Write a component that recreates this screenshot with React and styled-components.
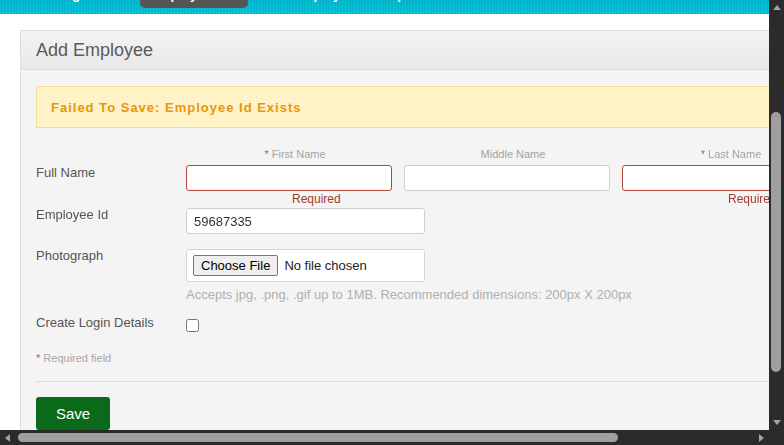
import React, { useLayoutEffect, useRef } from 'react';
import styled, { createGlobalStyle } from 'styled-components';

const App = () => {
  const viewRef = useRef(null);
  const firstRef = useRef(null);

  useLayoutEffect(() => {
    if (firstRef.current) firstRef.current.focus({ preventScroll: true });
    if (viewRef.current) viewRef.current.scrollTop = 160;
  }, []);

  return (
    <Screen>
      <GlobalStyle />
      <Viewport ref={viewRef}>
        <Page>
          <Branding>
            <Logo>Orange<b>HRM</b></Logo>
            <Welcome>Welcome Admin</Welcome>
          </Branding>
          <MenuBar>
            <MenuItem>Configuration</MenuItem>
            <MenuItem active>Employee List</MenuItem>
            <MenuItem>Add Employee</MenuItem>
            <MenuItem>Reports</MenuItem>
          </MenuBar>

          <Panel>
            <PanelHead>
              <Title>Add Employee</Title>
            </PanelHead>
            <PanelBody>
              <Message>Failed To Save: Employee Id Exists</Message>

              <Row first>
                <Label offset={18}>Full Name</Label>
                <NameCol>
                  <SubLabel><Star>*</Star> First Name</SubLabel>
                  <Input ref={firstRef} invalid />
                  <Error>Required</Error>
                </NameCol>
                <NameCol>
                  <SubLabel>Middle Name</SubLabel>
                  <Input />
                  <Error />
                </NameCol>
                <NameCol>
                  <SubLabel><Star>*</Star> Last Name</SubLabel>
                  <Input invalid />
                  <Error>Required</Error>
                </NameCol>
              </Row>

              <Row gap={2}>
                <Label>Employee Id</Label>
                <Input wide defaultValue="59687335" />
              </Row>

              <Row gap={15}>
                <Label>Photograph</Label>
                <div>
                  <FileBox>
                    <FileInput type="file" />
                  </FileBox>
                  <Hint>Accepts jpg, .png, .gif up to 1MB. Recommended dimensions: 200px X 200px</Hint>
                </div>
              </Row>

              <Row gap={14}>
                <Label>Create Login Details</Label>
                <Check type="checkbox" />
              </Row>

              <Note><Star>*</Star> Required field</Note>
              <Divider />
              <SaveButton>Save</SaveButton>
            </PanelBody>
          </Panel>
        </Page>
      </Viewport>

      <VBar>
        <Arrow dir="up" />
        <VTrack>
          <VThumb />
        </VTrack>
        <Arrow dir="down" />
      </VBar>
      <HBar>
        <Arrow dir="left" />
        <HTrack>
          <HThumb />
        </HTrack>
        <Arrow dir="right" />
      </HBar>
      <Corner />
    </Screen>
  );
};

const GlobalStyle = createGlobalStyle`
  html, body {
    margin: 0;
    overflow: hidden;
    background: #fff;
  }
  body {
    font-family: "Liberation Sans", Arial, sans-serif;
    color: #5a5a5a;
  }
`;

const Screen = styled.div`
  width: 784px;
  height: 445px;
  display: grid;
  grid-template-columns: 769px 15px;
  grid-template-rows: 430px 15px;
`;

const Viewport = styled.div`
  overflow: hidden;
  background: #fff;
`;

const barBg = '#2b2b2b';

const VBar = styled.div`
  display: flex;
  flex-direction: column;
  background: ${barBg};
`;

const HBar = styled.div`
  display: flex;
  background: ${barBg};
`;

const Corner = styled.div`
  background: ${barBg};
`;

const VTrack = styled.div`
  flex: 1;
  padding: 97px 3px 0 2px;
`;

const VThumb = styled.div`
  height: 260px;
  border-radius: 5px;
  background: #9f9f9f;
`;

const HTrack = styled.div`
  flex: 1;
  padding: 3px 0 3px 3px;
`;

const HThumb = styled.div`
  width: 600px;
  height: 9px;
  border-radius: 5px;
  background: #9f9f9f;
`;

const arrowShapes = {
  up: 'border-width: 0 4.5px 5px; border-color: transparent transparent #a3a3a3;',
  down: 'border-width: 5px 4.5px 0; border-color: #a3a3a3 transparent transparent;',
  left: 'border-width: 4.5px 5px 4.5px 0; border-color: transparent #a3a3a3 transparent transparent;',
  right: 'border-width: 4.5px 0 4.5px 5px; border-color: transparent transparent transparent #a3a3a3;',
};

const Arrow = styled.div`
  flex: 0 0 15px;
  width: 15px;
  height: 15px;
  display: flex;
  align-items: center;
  justify-content: center;
  &::before {
    content: '';
    border-style: solid;
    ${p => arrowShapes[p.dir]}
  }
`;

const Page = styled.div`
  width: 945px;
  padding-bottom: 55px;
`;

const Branding = styled.div`
  height: 129px;
  padding: 0 29px;
  display: flex;
  align-items: center;
  justify-content: space-between;
`;

const Logo = styled.div`
  font-size: 30px;
  color: #f28c28;
  b { color: #5a5a5a; }
`;

const Welcome = styled.a`
  font-size: 13px;
  color: #5a5a5a;
`;

const MenuBar = styled.nav`
  height: 45px;
  display: flex;
  gap: 6px;
  padding-left: 29px;
  background:
    repeating-linear-gradient(90deg, rgba(255, 255, 255, 0.05) 0 1px, rgba(0, 0, 0, 0.03) 1px 3px),
    linear-gradient(#009fba, #00c4da);
`;

const MenuItem = styled.div`
  height: 39px;
  box-sizing: border-box;
  padding: 18px 10px 0;
  font-size: 13px;
  font-weight: bold;
  line-height: 16px;
  color: #fff;
  border-radius: 0 0 5px 5px;
  background: ${p => (p.active ? '#555555' : 'transparent')};
`;

const Panel = styled.section`
  margin: 16px 20px 0;
  border: 1px solid #dedede;
  background: #f4f4f4;
`;

const PanelHead = styled.div`
  height: 38px;
  padding: 0 15px;
  display: flex;
  align-items: center;
  border-bottom: 1px solid #dedede;
  background: linear-gradient(#f4f4f4, #e8e8e8);
`;

const Title = styled.h1`
  margin: 0;
  font-size: 18px;
  line-height: 22px;
  font-weight: normal;
  color: #5a5a5a;
`;

const PanelBody = styled.div`
  padding: 16px 15px 15px;
`;

const Message = styled.div`
  height: 40px;
  padding: 0 14px;
  display: flex;
  align-items: center;
  border: 1px solid #f6dc96;
  background: #fff2c6;
  color: #e8960f;
  font-size: 13px;
  font-weight: bold;
  letter-spacing: 1px;
`;

const Row = styled.div`
  display: flex;
  align-items: flex-start;
  margin-top: ${p => (p.first ? 20 : p.gap || 0)}px;
`;

const Label = styled.label`
  flex: 0 0 150px;
  margin-top: ${p => (p.offset || 0) - 1}px;
  font-size: 13px;
  line-height: 16px;
  color: #555;
`;

const NameCol = styled.div`
  flex: 0 0 218px;
  text-align: center;
`;

const SubLabel = styled.div`
  height: 13px;
  margin-bottom: 4px;
  font-size: 11px;
  line-height: 13px;
  color: #a3a3a3;
`;

const Star = styled.span`
  color: #b8623e;
`;

const Input = styled.input`
  display: block;
  box-sizing: border-box;
  width: ${p => (p.wide ? 239 : 206)}px;
  height: 26px;
  margin: 0;
  padding: 0 7px;
  border: 1px solid ${p => (p.invalid ? '#b2463a' : '#cfcfcf')};
  border-radius: 3px;
  background: #fff;
  font-family: "Liberation Sans", Arial, sans-serif;
  font-size: 13px;
  color: #333;
  caret-color: #333;
  &:focus { outline: none; }
`;

const Error = styled.div`
  height: 14px;
  margin-top: 1px;
  padding-left: 106px;
  text-align: left;
  font-size: 12px;
  line-height: 14px;
  color: #a33b2c;
`;

const FileBox = styled.div`
  box-sizing: border-box;
  width: 239px;
  height: 33px;
  padding: 0 6px;
  display: flex;
  align-items: center;
  border: 1px solid #d6d6d6;
  border-radius: 3px;
  background: #fff;
`;

const FileInput = styled.input`
  font-family: "Liberation Sans", Arial, sans-serif;
  font-size: 13px;
  color: #222;
  &::file-selector-button {
    height: 21px;
    margin-right: 6px;
    padding: 0 7px;
    border: 1px solid #767676;
    border-radius: 2px;
    background: #efefef;
    font-family: "Liberation Sans", Arial, sans-serif;
    font-size: 13px;
    color: #000;
  }
`;

const Hint = styled.div`
  margin-top: 6px;
  font-size: 13px;
  line-height: 14px;
  color: #b0b0b0;
  white-space: nowrap;
`;

const Check = styled.input`
  width: 13px;
  height: 13px;
  margin: 3px 0 0;
`;

const Note = styled.div`
  margin-top: 20px;
  font-size: 11px;
  line-height: 13px;
  color: #a6a6a6;
`;

const Divider = styled.hr`
  margin: 16px 0 0;
  border: 0;
  border-top: 1px solid #dcdcdc;
`;

const SaveButton = styled.button`
  margin-top: 15px;
  width: 74px;
  height: 33px;
  border: 0;
  border-radius: 3px;
  background: #0b6a1a;
  color: #fff;
  font-family: "Liberation Sans", Arial, sans-serif;
  font-size: 15px;
`;

export default App;
